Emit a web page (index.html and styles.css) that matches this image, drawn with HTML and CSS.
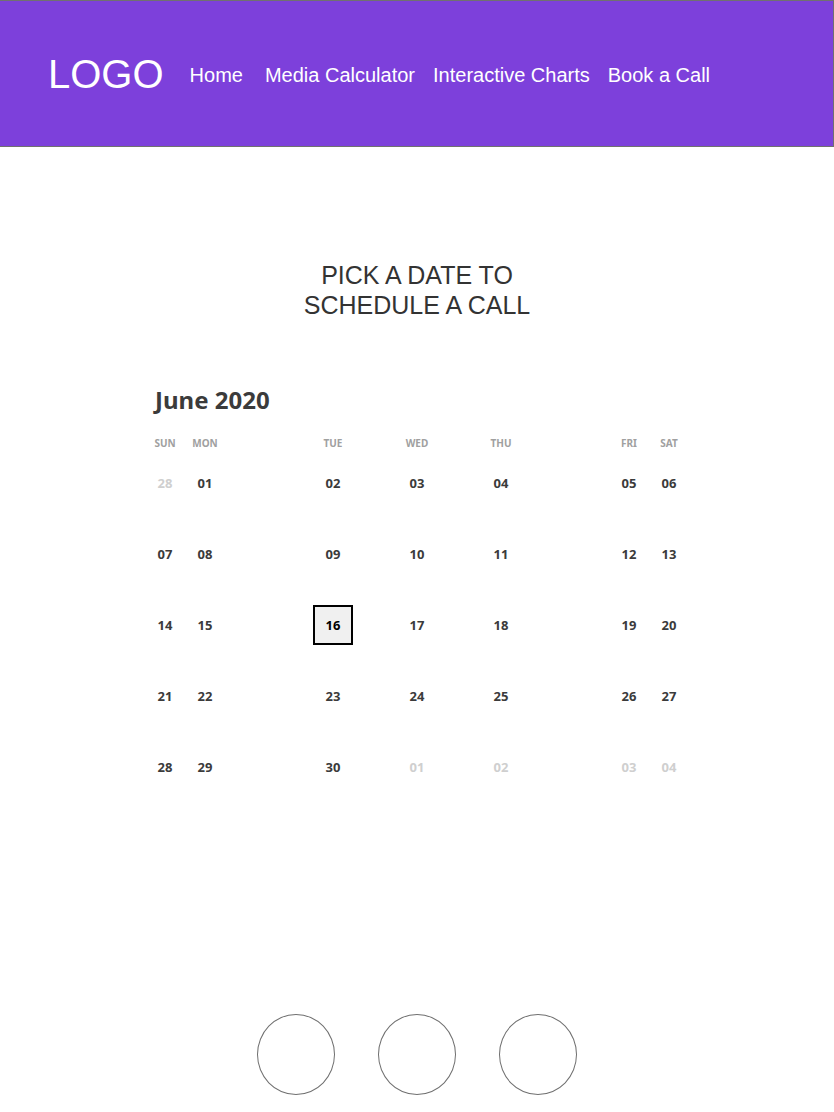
FILE: index.html
```html
<!DOCTYPE html>
<html lang="en">
<head>
<meta charset="utf-8">
<meta name="viewport" content="width=device-width, initial-scale=1">
<title>Book a Call</title>
<link rel="stylesheet" href="styles.css">
</head>
<body>
<header class="site-header">
  <a class="logo" href="#">LOGO</a>
  <nav class="nav" aria-label="Main">
    <a class="nav-home" href="#">Home</a>
    <a href="#">Media Calculator</a>
    <a href="#">Interactive Charts</a>
    <a href="#">Book a Call</a>
  </nav>
</header>
<main class="main">
  <h1 class="title">PICK A DATE TO<br>SCHEDULE A CALL</h1>
  <section class="calendar" aria-labelledby="month">
    <h2 class="month" id="month">June 2020</h2>
    <table class="days">
      <colgroup>
        <col class="col-edge"><col class="col-wide"><col class="col-mid"><col class="col-mid"><col class="col-mid"><col class="col-wide"><col class="col-edge">
      </colgroup>
      <thead>
        <tr><th scope="col">SUN</th><th scope="col">MON</th><th scope="col">TUE</th><th scope="col">WED</th><th scope="col">THU</th><th scope="col">FRI</th><th scope="col">SAT</th></tr>
      </thead>
      <tbody>
        <tr><td><button class="day other" type="button">28</button></td><td><button class="day" type="button">01</button></td><td><button class="day" type="button">02</button></td><td><button class="day" type="button">03</button></td><td><button class="day" type="button">04</button></td><td><button class="day" type="button">05</button></td><td><button class="day" type="button">06</button></td></tr>
        <tr><td><button class="day" type="button">07</button></td><td><button class="day" type="button">08</button></td><td><button class="day" type="button">09</button></td><td><button class="day" type="button">10</button></td><td><button class="day" type="button">11</button></td><td><button class="day" type="button">12</button></td><td><button class="day" type="button">13</button></td></tr>
        <tr><td><button class="day" type="button">14</button></td><td><button class="day" type="button">15</button></td><td><button class="day selected" type="button" aria-pressed="true">16</button></td><td><button class="day" type="button">17</button></td><td><button class="day" type="button">18</button></td><td><button class="day" type="button">19</button></td><td><button class="day" type="button">20</button></td></tr>
        <tr><td><button class="day" type="button">21</button></td><td><button class="day" type="button">22</button></td><td><button class="day" type="button">23</button></td><td><button class="day" type="button">24</button></td><td><button class="day" type="button">25</button></td><td><button class="day" type="button">26</button></td><td><button class="day" type="button">27</button></td></tr>
        <tr><td><button class="day" type="button">28</button></td><td><button class="day" type="button">29</button></td><td><button class="day" type="button">30</button></td><td><button class="day other" type="button">01</button></td><td><button class="day other" type="button">02</button></td><td><button class="day other" type="button">03</button></td><td><button class="day other" type="button">04</button></td></tr>
      </tbody>
    </table>
  </section>
</main>
<footer class="footer">
  <span class="circle"></span>
  <span class="circle"></span>
  <span class="circle"></span>
</footer>
</body>
</html>
```
FILE: styles.css
```css
* {
  box-sizing: border-box;
}

body {
  margin: 0;
  background: #fff;
  font-family: "Liberation Sans", Arial, sans-serif;
  color: #333;
}

.site-header {
  display: flex;
  align-items: center;
  gap: 26px;
  padding: 51px 48px 49px;
  background: #7d40db;
  border: 1px solid #707070;
  border-left: 0;
}

.site-header a {
  color: #fff;
  text-decoration: none;
}

.logo {
  font-size: 40px;
  line-height: 45px;
}

.nav {
  display: flex;
  flex-wrap: wrap;
  gap: 18px;
  font-size: 20px;
  line-height: 24px;
}

.nav-home {
  padding-right: 4px;
}

.main {
  padding: 113px 24px 0;
}

.title {
  margin: 0;
  font-size: 25px;
  font-weight: 400;
  line-height: 30px;
  text-align: center;
}

.calendar {
  max-width: 544px;
  margin: 64px auto 0;
  font-family: "Noto Sans", "Open Sans", sans-serif;
}

.month {
  margin: 0;
  padding-left: 10px;
  font-size: 24px;
  font-weight: 700;
  line-height: 32px;
  color: #3b3b3b;
}

.days {
  width: 100%;
  margin-top: 17px;
  table-layout: fixed;
  border-collapse: collapse;
}

.col-edge {
  width: 40px;
}

.col-wide {
  width: 106px;
}

.days th,
.days td {
  padding: 0;
  text-align: center;
  vertical-align: top;
}

.days th {
  height: 30px;
  font-size: 10px;
  line-height: 20px;
  color: #a0a0a0;
}

.days td {
  height: 71px;
}

.days tr > :nth-child(2) {
  padding-right: 66px;
}

.days tr > :nth-child(6) {
  padding-left: 66px;
}

.day {
  display: block;
  width: 40px;
  height: 40px;
  margin: 0 auto;
  padding: 0;
  border: 2px solid transparent;
  background: transparent;
  font: 700 13px/20px "Noto Sans", "Open Sans", sans-serif;
  color: #3b3b3b;
  cursor: pointer;
}

.other {
  color: #cfcfcf;
}

.day.selected {
  border-color: #000;
  background: #f0f0f0;
  color: #000;
}

.footer {
  display: flex;
  justify-content: center;
  gap: 43px;
  padding: 196px 24px 17px;
}

.circle {
  width: 78px;
  height: 81px;
  border: 1px solid #707070;
  border-radius: 50%;
}
```
